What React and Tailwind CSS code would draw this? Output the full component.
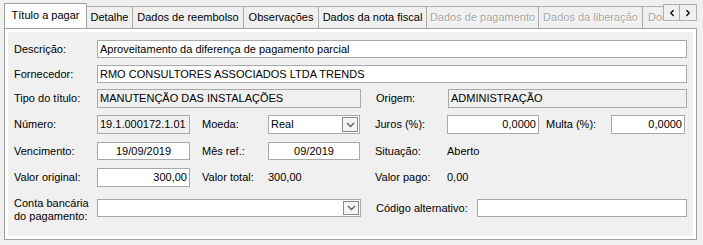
import { ChevronLeft, ChevronRight } from "lucide-react";

const FONT = { fontFamily: '"Liberation Sans", Arial, sans-serif' };

function Chevron() {
  return (
    <svg width="9" height="6" viewBox="0 0 9 6" className="text-[#606060]">
      <path d="M1 1 L4.5 4.5 L8 1" fill="none" stroke="currentColor" strokeWidth="1.4" />
    </svg>
  );
}

function Label({ w, children, className = "" }) {
  return (
    <div className={`shrink-0 leading-[13px] ${w} ${className}`}>{children}</div>
  );
}

function Field({ w, value = "", align = "left", readOnly = false }) {
  const alignCls =
    align === "right" ? "justify-end pr-[2px]" : align === "center" ? "justify-center" : "pl-[2px]";
  return (
    <div
      className={`flex h-full items-center border border-[#a9a9a9] ${
        readOnly ? "bg-[#f0f0f0]" : "bg-white"
      } ${alignCls} ${w}`}
    >
      <span className="whitespace-nowrap">{value}</span>
    </div>
  );
}

function Select({ w, value = "" }) {
  return (
    <div className={`flex h-full items-stretch border border-[#a9a9a9] bg-white ${w}`}>
      <div className="flex flex-1 items-center pl-[2px]">{value}</div>
      <div className="my-px mr-px flex w-[16px] items-center justify-center border border-[#8a8a8a] bg-[#f4f4f4]">
        <Chevron />
      </div>
    </div>
  );
}

const tabs = [
  { label: "Detalhe", w: "w-[46px]" },
  { label: "Dados de reembolso", w: "w-[111px]" },
  { label: "Observações", w: "w-[75px]" },
  { label: "Dados da nota fiscal", w: "w-[108px]" },
  { label: "Dados de pagamento", w: "w-[112px]", off: true },
  { label: "Dados da liberação", w: "w-[104px]", off: true },
  { label: "Documentos", w: "w-[70px]", off: true, left: true },
];

export default function App() {
  return (
    <div
      className="relative h-[245px] w-[703px] overflow-hidden bg-[#f0f0f0] pl-[4px] pt-[3px] text-[11px] text-black"
      style={FONT}
    >
      {/* barra de abas */}
      <div className="flex h-[25px] w-[693px] items-end overflow-hidden">
        <div className="relative z-10 -mb-px flex h-[26px] w-[83px] shrink-0 items-center justify-center border-x border-t border-[#a0a0a0] bg-white pb-[2px]">
          Título a pagar
        </div>
        {tabs.map((t) => (
          <div
            key={t.label}
            className={`flex h-[22px] shrink-0 items-center overflow-hidden whitespace-nowrap border-r border-t border-[#adadad] bg-[#f0f0f0] ${
              t.left ? "pl-[5px]" : "justify-center"
            } ${t.w} ${t.off ? "text-[#a6a6a6] [text-shadow:1px_1px_0_#ffffff]" : ""}`}
          >
            {t.label}
          </div>
        ))}
      </div>
      <div className="absolute left-[663px] top-[4px] z-20 flex">
        <div className="flex h-[17px] w-[17px] items-center justify-center border border-[#adadad] bg-[#f0f0f0]">
          <ChevronLeft size={10} strokeWidth={3} />
        </div>
        <div className="-ml-px flex h-[17px] w-[18px] items-center justify-center border border-[#adadad] bg-[#f0f0f0]">
          <ChevronRight size={10} strokeWidth={3} />
        </div>
      </div>

      {/* painel */}
      <div className="h-[212px] w-[693px] border border-[#a0a0a0] bg-white px-[3px] pb-[3px] pt-[3px]">
        <div className="flex h-full flex-col bg-[#f0f0f0] pl-[6px] pr-[6px] pt-[8px]">
          <div className="flex h-[18px] items-center">
            <Label w="w-[83px]">Descrição:</Label>
            <Field w="flex-1" value="Aproveitamento da diferença de pagamento parcial" />
          </div>

          <div className="mt-[7px] flex h-[18px] items-center">
            <Label w="w-[83px]">Fornecedor:</Label>
            <Field w="flex-1" value="RMO CONSULTORES ASSOCIADOS LTDA TRENDS" />
          </div>

          <div className="mt-[6px] flex h-[19px] items-center">
            <Label w="w-[83px]">Tipo do título:</Label>
            <Field w="w-[264px]" readOnly value="MANUTENÇÃO DAS INSTALAÇÕES" />
            <Label w="w-[72px]" className="ml-[15px]">Origem:</Label>
            <Field w="w-[239px]" readOnly value="ADMINISTRAÇÃO" />
          </div>

          <div className="mt-[7px] flex h-[19px] items-center">
            <Label w="w-[83px]">Número:</Label>
            <Field w="w-[93px]" readOnly value="19.1.000172.1.01" />
            <Label w="w-[66px]" className="ml-[12px]">Moeda:</Label>
            <Select w="w-[92px]" value="Real" />
            <Label w="w-[72px]" className="ml-[15px]">Juros (%):</Label>
            <Field w="w-[92px]" align="right" value="0,0000" />
            <Label w="w-[65px]" className="ml-[7px]">Multa (%):</Label>
            <Field w="w-[74px]" align="right" value="0,0000" />
          </div>

          <div className="mt-[8px] flex h-[18px] items-center">
            <Label w="w-[83px]">Vencimento:</Label>
            <Field w="w-[93px]" align="center" value="19/09/2019" />
            <Label w="w-[66px]" className="ml-[12px]">Mês ref.:</Label>
            <Field w="w-[92px]" align="center" value="09/2019" />
            <Label w="w-[72px]" className="ml-[15px]">Situação:</Label>
            <span>Aberto</span>
          </div>

          <div className="mt-[8px] flex h-[19px] items-center">
            <Label w="w-[83px]">Valor original:</Label>
            <Field w="w-[93px]" align="right" value="300,00" />
            <Label w="w-[66px]" className="ml-[12px]">Valor total:</Label>
            <Label w="w-[92px]">300,00</Label>
            <Label w="w-[72px]" className="ml-[15px]">Valor pago:</Label>
            <span>0,00</span>
          </div>

          <div className="mt-[12px] flex h-[18px] items-center">
            <Label w="w-[83px]" className="pt-[4px]">
              Conta bancária
              <br />
              do pagamento:
            </Label>
            <Select w="w-[264px]" />
            <Label w="w-[101px]" className="ml-[15px]">Código alternativo:</Label>
            <Field w="flex-1" />
          </div>
        </div>
      </div>
    </div>
  );
}
